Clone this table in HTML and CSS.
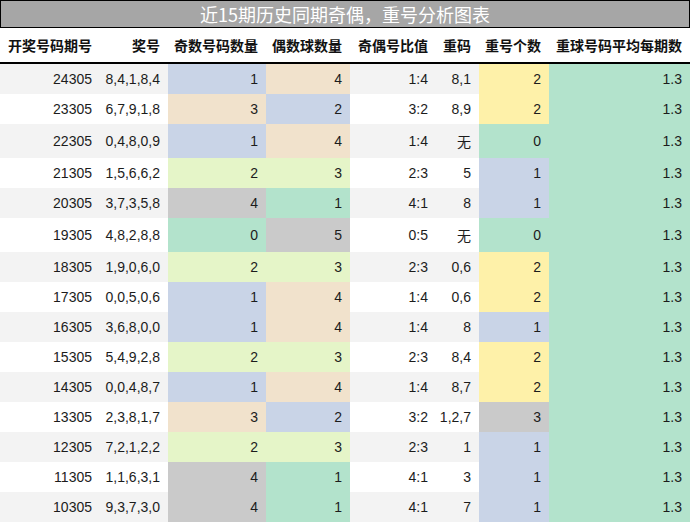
FILE: index.html
```html
<!DOCTYPE html>
<html>
<head>
<meta charset="utf-8">
<link rel="stylesheet" href="styles.css">
</head>
<body>
<div class="title">近15期历史同期奇偶，重号分析图表</div>
<table class="grid">
<colgroup>
<col class="w1"><col class="w2"><col class="w3"><col class="w4"><col class="w5"><col class="w6"><col class="w7"><col class="w8">
</colgroup>
<thead>
<tr><th class="left">开奖号码期号</th><th>奖号</th><th>奇数号码数量</th><th>偶数球数量</th><th>奇偶号比值</th><th>重码</th><th>重号个数</th><th>重球号码平均每期数</th></tr>
</thead>
<tbody>
<tr class="s"><td>24305</td><td>8,4,1,8,4</td><td class="cb">1</td><td class="ce">4</td><td>1:4</td><td>8,1</td><td class="cy">2</td><td class="cg">1.3</td></tr>
<tr><td>23305</td><td>6,7,9,1,8</td><td class="ce">3</td><td class="cb">2</td><td>3:2</td><td>8,9</td><td class="cy">2</td><td class="cg">1.3</td></tr>
<tr class="s"><td>22305</td><td>0,4,8,0,9</td><td class="cb">1</td><td class="ce">4</td><td>1:4</td><td>无</td><td class="cg">0</td><td class="cg">1.3</td></tr>
<tr><td>21305</td><td>1,5,6,6,2</td><td class="cl">2</td><td class="cl">3</td><td>2:3</td><td>5</td><td class="cb">1</td><td class="cg">1.3</td></tr>
<tr class="s"><td>20305</td><td>3,7,3,5,8</td><td class="cx">4</td><td class="cg">1</td><td>4:1</td><td>8</td><td class="cb">1</td><td class="cg">1.3</td></tr>
<tr><td>19305</td><td>4,8,2,8,8</td><td class="cg">0</td><td class="cx">5</td><td>0:5</td><td>无</td><td class="cg">0</td><td class="cg">1.3</td></tr>
<tr class="s"><td>18305</td><td>1,9,0,6,0</td><td class="cl">2</td><td class="cl">3</td><td>2:3</td><td>0,6</td><td class="cy">2</td><td class="cg">1.3</td></tr>
<tr><td>17305</td><td>0,0,5,0,6</td><td class="cb">1</td><td class="ce">4</td><td>1:4</td><td>0,6</td><td class="cy">2</td><td class="cg">1.3</td></tr>
<tr class="s"><td>16305</td><td>3,6,8,0,0</td><td class="cb">1</td><td class="ce">4</td><td>1:4</td><td>8</td><td class="cb">1</td><td class="cg">1.3</td></tr>
<tr><td>15305</td><td>5,4,9,2,8</td><td class="cl">2</td><td class="cl">3</td><td>2:3</td><td>8,4</td><td class="cy">2</td><td class="cg">1.3</td></tr>
<tr class="s"><td>14305</td><td>0,0,4,8,7</td><td class="cb">1</td><td class="ce">4</td><td>1:4</td><td>8,7</td><td class="cy">2</td><td class="cg">1.3</td></tr>
<tr><td>13305</td><td>2,3,8,1,7</td><td class="ce">3</td><td class="cb">2</td><td>3:2</td><td>1,2,7</td><td class="cx">3</td><td class="cg">1.3</td></tr>
<tr class="s"><td>12305</td><td>7,2,1,2,2</td><td class="cl">2</td><td class="cl">3</td><td>2:3</td><td>1</td><td class="cb">1</td><td class="cg">1.3</td></tr>
<tr><td>11305</td><td>1,1,6,3,1</td><td class="cx">4</td><td class="cg">1</td><td>4:1</td><td>3</td><td class="cb">1</td><td class="cg">1.3</td></tr>
<tr class="s"><td>10305</td><td>9,3,7,3,0</td><td class="cx">4</td><td class="cg">1</td><td>4:1</td><td>7</td><td class="cb">1</td><td class="cg">1.3</td></tr>
</tbody>
</table>
</body>
</html>
```
FILE: styles.css
```css
html, body {
  margin: 0;
  padding: 0;
  background: #ffffff;
}
body {
  width: 690px;
  font-family: "Liberation Sans", "Noto Sans CJK SC", Arial, sans-serif;
  color: #1c1c1c;
}
.title {
  box-sizing: border-box;
  height: 28px;
  border: 1px solid #000;
  background: #a6a6a6;
  color: #ffffff;
  font-family: "Noto Sans CJK SC", sans-serif;
  font-size: 18px;
  line-height: 26px;
  text-align: center;
}
.grid {
  width: 690px;
  border-collapse: collapse;
  table-layout: fixed;
  font-size: 14px;
}
.w1 { width: 100px; }
.w2 { width: 68px; }
.w3 { width: 98px; }
.w4 { width: 84px; }
.w5 { width: 86px; }
.w6 { width: 43px; }
.w7 { width: 70px; }
.w8 { width: 141px; }
.grid th {
  font-family: "Noto Sans CJK SC", sans-serif;
  font-weight: bold;
  color: #111;
  text-align: right;
  padding: 7px 8px 7px 0;
  line-height: 20px;
  border-bottom: 2px solid #000;
  white-space: nowrap;
}
.grid th.left {
  text-align: left;
  padding-left: 8px;
}
.grid td {
  text-align: right;
  padding: 7px 8px 7px 0;
  white-space: nowrap;
}
.grid tr.s td { background: #f3f3f3; }
.grid td.cb, .grid tr.s td.cb { background: #c9d4e7; }
.grid td.ce, .grid tr.s td.ce { background: #f1e2cc; }
.grid td.cl, .grid tr.s td.cl { background: #e5f5c8; }
.grid td.cx, .grid tr.s td.cx { background: #cacaca; }
.grid td.cg, .grid tr.s td.cg { background: #b3e3cc; }
.grid td.cy, .grid tr.s td.cy { background: #fef1a9; }
```
